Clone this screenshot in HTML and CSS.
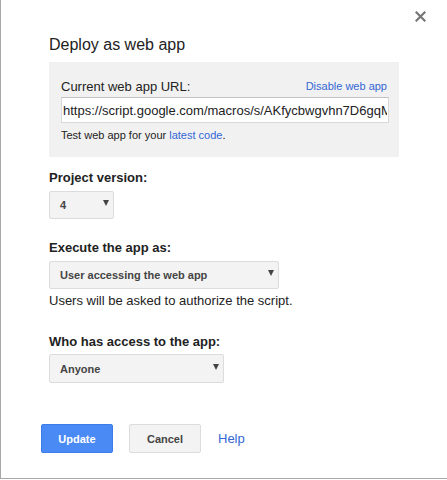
FILE: index.html
```html
<!DOCTYPE html>
<html>
<head>
<meta charset="utf-8">
<link rel="stylesheet" href="styles.css">
</head>
<body>
<div class="dialog">
  <button class="close" aria-label="Close">
    <svg width="11" height="11" viewBox="0 0 11 11"><path d="M1.5 1.5L9.5 9.5M9.5 1.5L1.5 9.5" stroke="#777" stroke-width="2.2" stroke-linecap="square"/></svg>
  </button>
  <div class="content">
    <div class="title">Deploy as web app</div>
    <div class="urlbox">
      <div class="urlhead">
        <span class="urllabel">Current web app URL:</span>
        <a class="link small" href="#">Disable web app</a>
      </div>
      <input class="urlinput" type="text" value="https://script.google.com/macros/s/AKfycbwgvhn7D6gqMxYzExampleDeployment/exec" readonly>
      <div class="hint">Test web app for your <a class="link" href="#">latest code</a>.</div>
    </div>

    <div class="label first">Project version:</div>
    <div class="select w-version"><span>4</span><span class="arrow"></span></div>

    <div class="label">Execute the app as:</div>
    <div class="select w-exec"><span>User accessing the web app</span><span class="arrow"></span></div>
    <div class="note">Users will be asked to authorize the script.</div>

    <div class="label who">Who has access to the app:</div>
    <div class="select w-who"><span>Anyone</span><span class="arrow"></span></div>
  </div>
  <div class="buttons">
    <button class="btn primary">Update</button>
    <button class="btn">Cancel</button>
    <a class="link help" href="#">Help</a>
  </div>
</div>
</body>
</html>
```
FILE: styles.css
```css
html, body {
  margin: 0;
  padding: 0;
  background: #fff;
}
body {
  font-family: "Liberation Sans", Arial, sans-serif;
  color: #222;
}
.dialog {
  position: relative;
  box-sizing: border-box;
  width: 447px;
  height: 479px;
  border-left: 1px solid #a8a8a8;
  border-bottom: 1px solid #a8a8a8;
  box-shadow: 0 1px 0 #d0d0d0;
  display: flex;
  flex-direction: column;
}
.close {
  position: absolute;
  top: 11px;
  left: 414px;
  width: 11px;
  height: 11px;
  padding: 0;
  border: 0;
  background: none;
  display: block;
}
.close svg { display: block; }
.content {
  padding: 35px 0 0 48px;
}
.title {
  font-size: 16px;
  line-height: 20px;
  color: #222;
}
.urlbox {
  margin-top: 7px;
  width: 350px;
  box-sizing: border-box;
  background: #f1f1f1;
  padding: 17px 10px 15px 12px;
}
.urlhead {
  display: flex;
  justify-content: space-between;
  align-items: center;
  font-size: 13px;
  line-height: 16px;
}
.link {
  color: #3367d6;
  text-decoration: none;
}
.small {
  font-size: 11px;
  margin-top: -3px;
  margin-right: 2px;
}
.urlinput {
  display: block;
  margin-top: 2px;
  box-sizing: border-box;
  width: 328px;
  height: 26px;
  padding: 0 1px;
  border: 1px solid #d9d9d9;
  border-top-color: #c0c0c0;
  background: #fff;
  font-family: "Liberation Sans", Arial, sans-serif;
  font-size: 13px;
  color: #222;
  outline: none;
}
.hint {
  margin-top: 5px;
  font-size: 11px;
  line-height: 14px;
}
.label {
  font-size: 13px;
  font-weight: bold;
  line-height: 16px;
  margin-top: 21px;
  margin-bottom: 5px;
}
.label.first { margin-top: 13px; margin-bottom: 5px; }
.label.who { margin-top: 25px; margin-bottom: 4px; }
.select {
  box-sizing: border-box;
  height: 28px;
  border: 1px solid #dcdcdc;
  border-radius: 2px;
  background: #f3f3f3;
  display: flex;
  align-items: center;
  justify-content: space-between;
  padding: 0 4px 0 10px;
  font-size: 11px;
  font-weight: bold;
  color: #444;
}
.arrow {
  width: 0;
  height: 0;
  border-left: 3px solid transparent;
  border-right: 3px solid transparent;
  border-top: 6px solid #444;
  margin-top: -4px;
}
.w-version { width: 65px; }
.w-exec { width: 230px; }
.w-who { width: 175px; height: 29px; }
.note {
  font-size: 13px;
  line-height: 16px;
  margin-top: 4px;
}
.buttons {
  margin-top: auto;
  margin-bottom: 25px;
  padding-left: 40px;
  display: flex;
  align-items: center;
  gap: 16px;
}
.btn {
  box-sizing: border-box;
  width: 72px;
  height: 29px;
  border: 1px solid #dcdcdc;
  border-radius: 2px;
  background: #f3f3f3;
  color: #444;
  font-family: "Liberation Sans", Arial, sans-serif;
  font-size: 11px;
  font-weight: bold;
  padding: 0;
}
.btn.primary {
  background: #4a8af4;
  border-color: #3b7ce8;
  color: #fff;
}
.help {
  font-size: 13px;
  margin-left: 1px;
}
```
